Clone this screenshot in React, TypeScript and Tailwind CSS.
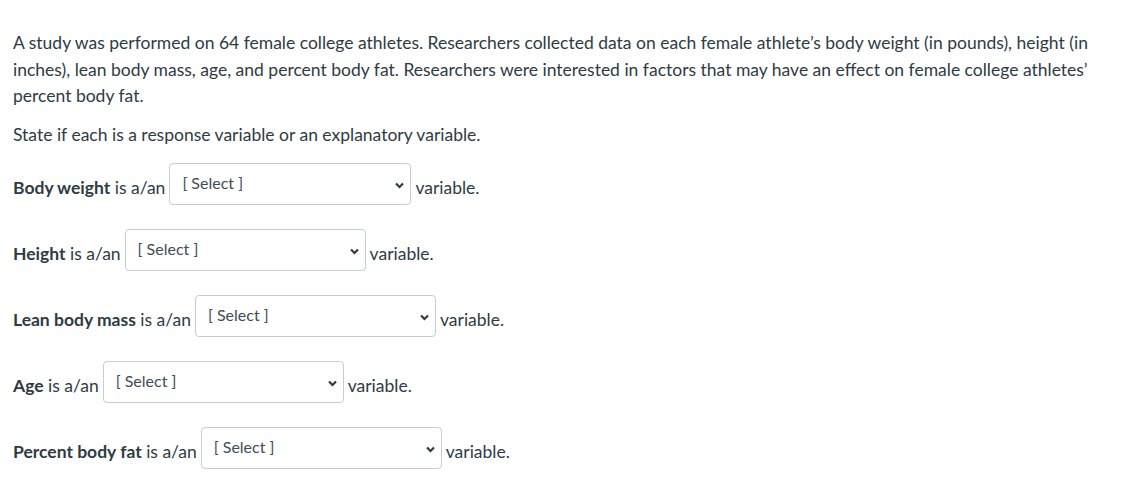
import React from "react";

function Sel({ w }: { w: string }) {
  return (
    <span
      className={`relative inline-block align-middle h-[42px] ${w} border border-[#c7cdd1] rounded-[4px] bg-white mx-[4px] mb-[11px]`}
    >
      <span className="absolute left-[12px] top-[8px] text-[16px] leading-[22px] text-[#3f4d57]">[ Select ]</span>
      <svg className="absolute right-[6px] top-[18px]" width="9" height="7" viewBox="0 0 9 7">
        <path d="M1 1.5 L4.5 5 L8 1.5" stroke="#2d3b45" strokeWidth="2.2" fill="none" />
      </svg>
    </span>
  );
}

const rows: [string, string][] = [
  ["Body weight", "w-[242px]"],
  ["Height", "w-[241px]"],
  ["Lean body mass", "w-[241px]"],
  ["Age", "w-[241px]"],
  ["Percent body fat", "w-[241px]"],
];

export default function App() {
  return (
    <div className="w-[1134px] h-[492px] bg-white text-[#2d3b45] font-['Lato',sans-serif] text-[17.5px] leading-[26.5px] px-[13px] pt-[30px]">
      <p className="mb-[12px] pr-[20px]">
        A study was performed on 64 female college athletes. Researchers collected data on each female athlete’s body weight (in pounds), height (in inches), lean body mass, age, and percent body fat. Researchers were interested in factors that may have an effect on female college athletes’ percent body fat.
      </p>
      <p className="mb-[15px]">State if each is a response variable or an explanatory variable.</p>
      <div className="flex flex-col gap-[25px]">
        {rows.map(([b, w]) => (
          <p key={b} className="h-[41px] leading-[41px]">
            <strong className="font-bold">{b}</strong> is a/an<Sel w={w} />variable.
          </p>
        ))}
      </div>
    </div>
  );
}
